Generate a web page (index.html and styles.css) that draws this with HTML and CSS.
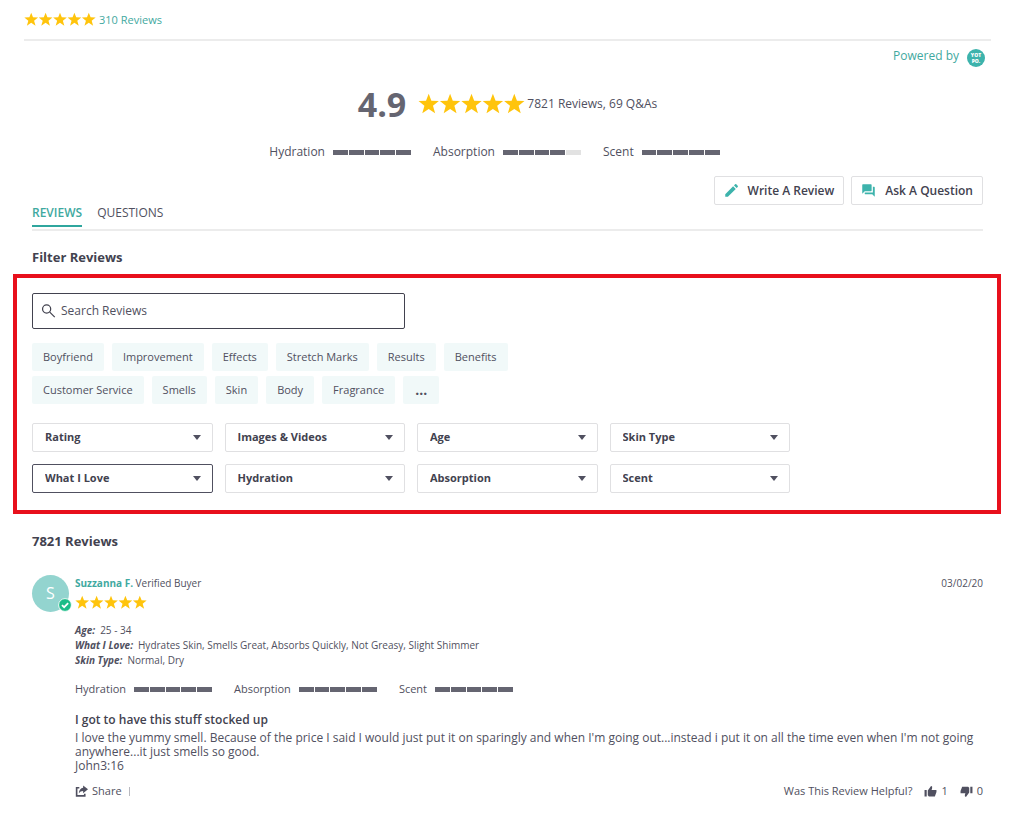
FILE: index.html
```
<!DOCTYPE html>
<html lang="en">
<head>
<meta charset="utf-8">
<title>Reviews</title>
<link rel="stylesheet" href="styles.css">
</head>
<body>
<svg class="defs" aria-hidden="true">
  <symbol id="stars" viewBox="0 0 100 20">
    <path id="star" d="M10 .5 12.500 7 19.500 7.300 14 11.600 16 18.600 10 14.600 4 18.600 6 11.600 .5 7.300 7.500 7Z"/>
    <use href="#star" x="20"/><use href="#star" x="40"/><use href="#star" x="60"/><use href="#star" x="80"/>
  </symbol>
</svg>
<div class="page">
  <header class="summary">
    <svg class="stars" role="img" aria-label="5 stars"><use href="#stars"/></svg>
    <a class="link" href="#reviews">310 Reviews</a>
  </header>

  <main class="widget">
    <div class="powered">
      <a class="link" href="#">Powered by</a>
      <span class="logo">YOT<br>PO.</span>
    </div>

    <section class="score">
      <strong class="score-value">4.9</strong>
      <svg class="stars stars-large" role="img" aria-label="4.9 stars"><use href="#stars"/></svg>
      <span class="score-text">7821 Reviews, 69 Q&amp;As</span>
    </section>

    <div class="meters meters-top">
      <div class="meter"><span>Hydration</span><span class="bar"><i></i><i></i><i></i><i></i><i></i></span></div>
      <div class="meter"><span>Absorption</span><span class="bar"><i></i><i></i><i></i><i></i><i class="empty"></i></span></div>
      <div class="meter"><span>Scent</span><span class="bar"><i></i><i></i><i></i><i></i><i></i></span></div>
    </div>

    <div class="actions">
      <button class="action" type="button">
        <svg viewBox="0 0 24 24"><path d="M2 22v-4.200L14.600 5.200l4.200 4.200L6.200 22zM16 3.800l1.700-1.700q1-1 2 0l2.200 2.200q1 1 0 2L20.200 8z"/></svg>Write A Review
      </button>
      <button class="action" type="button">
        <svg viewBox="0 0 24 24"><path d="M21 6h-2v9H6v2c0 .55.45 1 1 1h11l4 4V7c0-.55-.45-1-1-1zm-4 6V3c0-.55-.45-1-1-1H3c-.55 0-1 .45-1 1v14l4-4h10c.55 0 1-.45 1-1z"/></svg>Ask A Question
      </button>
    </div>

    <nav class="tabs">
      <a class="tab tab-active" href="#reviews">REVIEWS</a>
      <a class="tab" href="#questions">QUESTIONS</a>
    </nav>

    <h2 class="heading">Filter Reviews</h2>

    <section class="filters">
      <label class="search">
        <svg viewBox="0 0 24 24"><circle cx="9" cy="8" r="6.500"/><path d="M14 13l8 8"/></svg>
        <input class="search-input" type="text" aria-label="Search Reviews" placeholder="Search Reviews">
      </label>

      <div class="chips">
        <button class="chip" type="button">Boyfriend</button>
        <button class="chip" type="button">Improvement</button>
        <button class="chip" type="button">Effects</button>
        <button class="chip" type="button">Stretch Marks</button>
        <button class="chip" type="button">Results</button>
        <button class="chip" type="button">Benefits</button>
        <button class="chip" type="button">Customer Service</button>
        <button class="chip" type="button">Smells</button>
        <button class="chip" type="button">Skin</button>
        <button class="chip" type="button">Body</button>
        <button class="chip" type="button">Fragrance</button>
        <button class="chip chip-more" type="button">...</button>
      </div>

      <div class="selects">
        <div class="drop"><select class="select" aria-label="Rating"><option>Rating</option></select></div>
        <div class="drop"><select class="select" aria-label="Images &amp; Videos"><option>Images &amp; Videos</option></select></div>
        <div class="drop"><select class="select" aria-label="Age"><option>Age</option></select></div>
        <div class="drop"><select class="select" aria-label="Skin Type"><option>Skin Type</option></select></div>
        <div class="drop"><select class="select select-active" aria-label="What I Love"><option>What I Love</option></select></div>
        <div class="drop"><select class="select" aria-label="Hydration"><option>Hydration</option></select></div>
        <div class="drop"><select class="select" aria-label="Absorption"><option>Absorption</option></select></div>
        <div class="drop"><select class="select" aria-label="Scent"><option>Scent</option></select></div>
      </div>
    </section>

    <h2 class="heading" id="reviews">7821 Reviews</h2>

    <article class="review">
      <div class="avatar">S
        <svg class="badge" viewBox="0 0 16 16"><circle cx="8" cy="8" r="7.300"/><path d="M4.500 8.200l2.500 2.300 4.600-4.700"/></svg>
      </div>
      <div class="review-main">
        <div class="review-top">
          <span><b class="author">Suzzanna F.</b> Verified Buyer</span>
          <time datetime="2020-03-02">03/02/20</time>
        </div>
        <svg class="stars" role="img" aria-label="5 stars"><use href="#stars"/></svg>
        <dl class="facts">
          <div><dt>Age:</dt><dd>25 - 34</dd></div>
          <div><dt>What I Love:</dt><dd>Hydrates Skin, Smells Great, Absorbs Quickly, Not Greasy, Slight Shimmer</dd></div>
          <div><dt>Skin Type:</dt><dd>Normal, Dry</dd></div>
        </dl>
        <div class="meters meters-review">
          <div class="meter"><span>Hydration</span><span class="bar"><i></i><i></i><i></i><i></i><i></i></span></div>
          <div class="meter"><span>Absorption</span><span class="bar"><i></i><i></i><i></i><i></i><i></i></span></div>
          <div class="meter"><span>Scent</span><span class="bar"><i></i><i></i><i></i><i></i><i></i></span></div>
        </div>
        <h3 class="review-title">I got to have this stuff stocked up</h3>
        <p class="review-text">I love the yummy smell. Because of the price I said I would just put it on sparingly and when I'm going out...instead i put it on all the time even when I'm not going anywhere...it just smells so good.<br>John3:16</p>
        <footer class="review-foot">
          <button class="plain" type="button"><svg class="icon" viewBox="0 0 24 24"><path class="line" d="M8 5H3v15h15v-4"/><path d="M15 1l9 7-9 7v-4Q10 11 7 15 8 6 15 5z"/></svg>Share</button>
          <span class="divider"></span>
          <span class="helpful">Was This Review Helpful?</span>
          <button class="plain vote" type="button" aria-label="Helpful, 1"><svg class="icon" viewBox="0 0 24 24"><path id="thumb" d="M1 9h4v12H1zM7 10l6-8q3 0 2 4l-1 3h9v4l-3 8H9l-2-2z"/></svg>1</button>
          <button class="plain vote" type="button" aria-label="Not helpful, 0"><svg class="icon" viewBox="0 0 24 24"><use href="#thumb" transform="rotate(180 12 12)"/></svg>0</button>
        </footer>
      </div>
    </article>
  </main>
</div>
</body>
</html>
```
FILE: styles.css
```
* { box-sizing: border-box; }
body {
  margin: 0;
  background: #fff;
  color: #505060;
  font: 12px/16px "Open Sans", "Noto Sans", sans-serif;
}
button, input, select { font: inherit; color: inherit; margin: 0; }
button, select { cursor: pointer; }
.defs { position: absolute; width: 0; height: 0; }
.page { padding: 0 33px 16px 24px; }
.link { color: #3fa9a0; text-decoration: none; }
.stars { display: block; flex: none; width: 72px; height: 15px; fill: #ffc40c; }
.stars-large { width: 107px; height: 22px; }

.summary {
  display: flex;
  align-items: center;
  gap: 3px;
  height: 41px;
  border-bottom: 2px solid #ececec;
  font-size: 11px;
}
.widget { padding: 0 8px; }
.powered { display: flex; justify-content: flex-end; gap: 8px; margin-right: -2px; padding-top: 7px; }
.logo {
  width: 18px;
  height: 18px;
  margin-top: 1px;
  padding-top: 3px;
  border-radius: 50%;
  background: #3db3ac;
  color: #fff;
  font-size: 5px;
  font-weight: 800;
  line-height: 6px;
  text-align: center;
}

.score { display: flex; align-items: center; justify-content: center; padding-top: 11px; }
.score-value { color: #656571; font-size: 34px; line-height: 52px; margin-right: 12px; }
.score-text { margin-left: 2px; }
.meters { display: flex; align-items: center; }
.meters-top { justify-content: center; gap: 22px; padding: 14px 26px 0 0; }
.meters-review { gap: 22px; padding-top: 13px; font-size: 11px; }
.meter { display: flex; align-items: center; gap: 8px; }
.bar { display: flex; gap: 1px; width: 78px; height: 5px; margin-top: 1px; }
.bar i { flex: 1; background: #656571; }
.bar .empty { background: #e2e2e2; }

.actions { display: flex; justify-content: flex-end; gap: 7px; padding-top: 16px; }
.action {
  display: flex;
  align-items: center;
  gap: 9px;
  height: 29px;
  padding: 0 9px;
  border: 1px solid #e0e0e2;
  border-radius: 2px;
  background: #fff;
  color: #42424f;
  font-weight: 600;
}
.action svg { width: 15px; height: 15px; fill: #3db3ac; }
.tabs { display: flex; gap: 15px; border-bottom: 2px solid #ececec; padding-bottom: 2px; }
.tab { padding-bottom: 4px; border-bottom: 2px solid transparent; color: inherit; text-decoration: none; }
.tab-active { color: #3fa9a0; border-color: #2fa69e; font-weight: 600; }

.heading { margin: 0; padding: 16px 0 7px; font-size: 13px; line-height: 20px; color: #42424f; }
.filters { margin: 0 -18px 1px -19px; padding: 15px 15px 17px; border: 4px solid #e8101c; }
.search {
  display: flex;
  align-items: center;
  width: 373px;
  max-width: 100%;
  height: 36px;
  border: 1px solid #42424f;
  border-radius: 2px;
}
.search svg { width: 15px; height: 15px; margin: 0 5px 0 8px; fill: none; stroke: #42424f; stroke-width: 2; }
.search-input { flex: 1; min-width: 0; padding: 0; border: 0; outline: 0; background: none; }
.search-input::placeholder { color: #505060; opacity: 1; }
.chips { display: flex; flex-wrap: wrap; gap: 5px 8px; max-width: 500px; padding-top: 14px; }
.chip { height: 28px; padding: 0 11px; border: 0; border-radius: 2px; background: #f1f9f9; font-size: 11px; }
.chip-more { padding: 0 12px; font-size: 14px; font-weight: 700; }
.selects { display: grid; grid-template-columns: repeat(4, 1fr); gap: 12px; max-width: 758px; padding-top: 19px; }
.drop { position: relative; }
.select {
  appearance: none;
  display: block;
  width: 100%;
  height: 29px;
  padding: 0 24px 1px 12px;
  border: 1px solid #e0e0e2;
  border-radius: 2px;
  background: #fff;
  color: #42424f;
  font-size: 11px;
  font-weight: 700;
}
.select-active { border-color: #505060; }
.drop::after {
  content: "";
  position: absolute;
  top: 12px;
  right: 12px;
  border: 4px solid transparent;
  border-top: 5px solid #505060;
  border-bottom: 0;
  pointer-events: none;
}

.review { display: flex; gap: 6px; padding-top: 17px; }
.avatar {
  position: relative;
  flex: none;
  width: 37px;
  height: 37px;
  border-radius: 50%;
  background: #93d4cf;
  color: #fff;
  font-size: 16px;
  line-height: 37px;
  text-align: center;
}
.badge { position: absolute; right: -3px; bottom: 0; width: 14px; height: 14px; }
.badge circle { fill: #1cbc88; stroke: #fff; stroke-width: 1; }
.badge path { fill: none; stroke: #fff; stroke-width: 2; }
.review-main { flex: 1; min-width: 0; }
.review-main .stars { margin-top: 4px; }
.review-top { display: flex; justify-content: space-between; font-size: 10px; }
.author { color: #3fa9a0; }
.facts { margin: 0; padding-top: 13px; font-size: 10px; line-height: 15px; }
.facts div { display: flex; gap: 5px; }
.facts dt { font-weight: 700; font-style: italic; }
.facts dd { margin: 0; }
.review-title { margin: 0; padding-top: 14px; font-size: 12px; font-weight: 600; line-height: 18px; color: #42424f; }
.review-text { margin: 0; padding-top: 2px; line-height: 14px; }
.review-foot { display: flex; align-items: center; padding-top: 10px; font-size: 11px; }
.plain { display: flex; align-items: center; gap: 4px; padding: 0; border: 0; background: none; }
.icon { width: 13px; height: 13px; fill: #505060; }
.line { fill: none; stroke: #505060; stroke-width: 3; }
.divider { width: 1px; height: 9px; margin-left: 7px; background: #b9b9c0; }
.helpful { margin-left: auto; }
.vote { margin-left: 12px; }
```
